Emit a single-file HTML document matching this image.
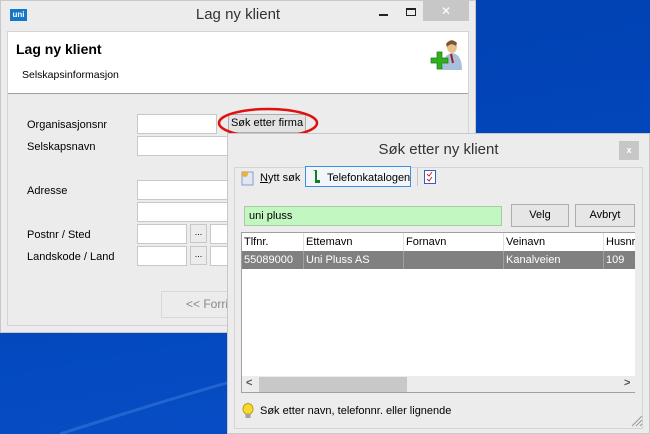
<!DOCTYPE html>
<html><head><style>
*{box-sizing:border-box;margin:0;padding:0}
body{width:650px;height:434px;overflow:hidden;position:relative;font-family:"Liberation Sans",Arial,sans-serif;font-size:11px;color:#000;
background:linear-gradient(170deg,#0040b0 0%,#0348bd 60%,#0a4fc8 100%)}
.a{position:absolute}
.in{position:absolute;background:#fff;border:1px solid #c8c8c8}
.btn{position:absolute;background:#e3e3e3;border:1px solid #adadad;text-align:center}
</style></head><body>
<svg class="a" style="left:0;top:330px" width="230" height="104"><path d="M60 104 Q150 75 230 52" stroke="#3f7ee0" stroke-width="3" fill="none" opacity=".5"/></svg>

<div class="a" style="left:0;top:0;width:476px;height:333px;background:#ececec;border:1px solid #c8c8c8">
 <div class="a" style="left:9px;top:8px;width:17px;height:12px;background:#1478c8;color:#fff;font-size:8px;font-weight:bold;line-height:12px;text-align:center">uni</div>
 <div class="a" style="left:0;top:5px;width:474px;text-align:center;font-size:15px;color:#333">Lag ny klient</div>
 <div class="a" style="left:378px;top:13px;width:9px;height:2px;background:#222"></div>
 <div class="a" style="left:405px;top:7px;width:10px;height:8px;border:1px solid #222;border-top-width:2px"></div>
 <div class="a" style="left:422px;top:0;width:46px;height:20px;background:#c7c7c7;color:#fff;font-size:12px;text-align:center;line-height:20px">✕</div>
 <div class="a" style="left:6px;top:30px;width:462px;height:295px;border:1px solid #d4d4d4"></div>
 <div class="a" style="left:7px;top:31px;width:460px;height:62px;background:#fff;border-bottom:1px solid #a0a0a0"></div>
 <div class="a" style="left:15px;top:40px;font-size:14px;font-weight:bold">Lag ny klient</div>
 <div class="a" style="left:21px;top:68px;font-size:10.5px">Selskapsinformasjon</div>
 <svg class="a" style="left:428px;top:36px" width="34" height="34"><ellipse cx="23" cy="10" rx="5" ry="6" fill="#e8c08a"/><path d="M17 7 Q22 0 28 6 L27 9 Q22 5 18 10Z" fill="#7a5530"/><path d="M13 33 Q14 17 23 16 Q33 17 33 33Z" fill="#a8c0dc"/><path d="M22 17 L24 26" stroke="#a02020" stroke-width="2"/><path d="M2 21h6v-6h5v6h6v5h-6v6h-5v-6h-6z" fill="#30b020" stroke="#1a7a10" stroke-width=".7"/></svg>
 <div class="a" style="left:26px;top:118px">Organisasjonsnr</div>
 <div class="a" style="left:26px;top:140px">Selskapsnavn</div>
 <div class="a" style="left:26px;top:184px">Adresse</div>
 <div class="a" style="left:26px;top:228px">Postnr / Sted</div>
 <div class="a" style="left:26px;top:250px">Landskode / Land</div>
</div>
<div class="in" style="left:137px;top:114px;width:80px;height:20px"></div>
<div class="btn" style="left:228px;top:114px;width:78px;height:19px;line-height:17px">Søk etter firma</div>
<svg class="a" style="left:216px;top:106px" width="106" height="34"><ellipse cx="52" cy="17" rx="49" ry="14" fill="none" stroke="#e01010" stroke-width="2.5"/></svg>
<div class="in" style="left:137px;top:136px;width:92px;height:20px"></div>
<div class="in" style="left:137px;top:180px;width:92px;height:20px"></div>
<div class="in" style="left:137px;top:202px;width:92px;height:20px"></div>
<div class="in" style="left:137px;top:224px;width:50px;height:20px"></div>
<div class="btn" style="left:190px;top:224px;width:17px;height:19px;font-size:9px;line-height:15px;background:#ececec;border-color:#c8c8c8">...</div>
<div class="in" style="left:210px;top:224px;width:20px;height:20px"></div>
<div class="in" style="left:137px;top:246px;width:50px;height:20px"></div>
<div class="btn" style="left:190px;top:246px;width:17px;height:19px;font-size:9px;line-height:15px;background:#ececec;border-color:#c8c8c8">...</div>
<div class="in" style="left:210px;top:246px;width:20px;height:20px"></div>
<div class="a" style="left:161px;top:291px;width:70px;height:27px;border:1px solid #d8d8d8;color:#888;font-size:12px;line-height:25px;padding-left:24px;overflow:hidden;white-space:nowrap">&lt;&lt; Forrige</div>

<div class="a" style="left:227px;top:133px;width:423px;height:301px;background:#ececec;border:1px solid #c8c8c8">
 <div class="a" style="left:0;top:7px;width:421px;text-align:center;font-size:15px;color:#333">Søk etter ny klient</div>
 <div class="a" style="left:391px;top:7px;width:20px;height:19px;background:#c7c7c7;color:#fff;font-size:9px;font-weight:bold;text-align:center;line-height:18px">x</div>
 <div class="a" style="left:6px;top:33px;width:409px;height:262px;border:1px solid #d4d4d4"></div>
</div>
<svg class="a" style="left:241px;top:170px" width="14" height="16"><rect x="1" y="2" width="11" height="13" fill="#dfe8f4" stroke="#8aa0c0"/><circle cx="4" cy="4" r="3" fill="#f0b030"/></svg>
<div class="a" style="left:260px;top:172px"><u>N</u>ytt søk</div>
<div class="a" style="left:305px;top:166px;width:106px;height:21px;border:1px solid #3c8fe0;background:#f2f6fb"></div>
<svg class="a" style="left:311px;top:169px" width="10" height="15"><path d="M2 1h4v10h3v3h-5v-12" fill="#108020"/></svg>
<div class="a" style="left:327px;top:172px">Telefonkatalogen</div>
<div class="a" style="left:417px;top:168px;width:1px;height:18px;background:#c8c8c8"></div>
<svg class="a" style="left:424px;top:170px" width="12" height="14"><rect x=".5" y=".5" width="11" height="13" fill="#fff" stroke="#3060c0"/><path d="M3 4l2 2 3-4M3 9l2 2 3-4" stroke="#d02020" fill="none"/></svg>
<div class="a" style="left:244px;top:206px;width:258px;height:20px;background:#c2f7c2;border:1px solid #a8c8a8;font-size:11px;padding:3px 4px">uni pluss</div>
<div class="btn" style="left:511px;top:204px;width:58px;height:23px;line-height:21px;background:#e6e6e6">Velg</div>
<div class="btn" style="left:575px;top:204px;width:60px;height:23px;line-height:21px;background:#e6e6e6">Avbryt</div>
<div class="a" style="left:241px;top:232px;width:394px;height:161px;background:#fff;border:1px solid #a0a0a0;border-right:none;overflow:hidden">
 <div class="a" style="left:0;top:0;width:400px;height:18px;line-height:18px">
  <span class="a" style="left:2px">Tlfnr.</span><span class="a" style="left:61px;border-left:1px solid #e0e0e0;padding-left:2px;height:18px">Ettemavn</span><span class="a" style="left:161px;border-left:1px solid #e0e0e0;padding-left:2px;height:18px">Fornavn</span><span class="a" style="left:261px;border-left:1px solid #e0e0e0;padding-left:2px;height:18px">Veinavn</span><span class="a" style="left:361px;border-left:1px solid #e0e0e0;padding-left:2px;height:18px">Husnr.</span>
 </div>
 <div class="a" style="left:0;top:18px;width:400px;height:18px;background:#808080;color:#fff;line-height:18px">
  <span class="a" style="left:2px">55089000</span><span class="a" style="left:61px;border-left:1px solid #a0a0a0;padding-left:2px;height:18px">Uni Pluss AS</span><span class="a" style="left:161px;border-left:1px solid #a0a0a0;height:18px"></span><span class="a" style="left:261px;border-left:1px solid #a0a0a0;padding-left:2px;height:18px">Kanalveien</span><span class="a" style="left:361px;border-left:1px solid #a0a0a0;padding-left:2px;height:18px">109</span>
 </div>
 <div class="a" style="left:0;top:143px;width:394px;height:17px;background:#ececec"></div>
 <div class="a" style="left:17px;top:144px;width:148px;height:15px;background:#c8c8c8"></div>
 <div class="a" style="left:4px;top:144px;font-size:11px;color:#555;font-weight:bold">&lt;</div>
 <div class="a" style="left:382px;top:144px;font-size:11px;color:#555;font-weight:bold">&gt;</div>
</div>
<svg class="a" style="left:242px;top:403px" width="12" height="16"><ellipse cx="6" cy="6" rx="5" ry="5.5" fill="#f8d830" stroke="#c0a010"/><rect x="3.5" y="11" width="5" height="4" fill="#a0a0a0"/></svg>
<div class="a" style="left:260px;top:405px">Søk etter navn, telefonnr. eller lignende</div>
<svg class="a" style="left:629px;top:413px" width="14" height="14"><path d="M13 3L3 13M13 7L7 13M13 11L11 13" stroke="#999"/></svg>
</body></html>
